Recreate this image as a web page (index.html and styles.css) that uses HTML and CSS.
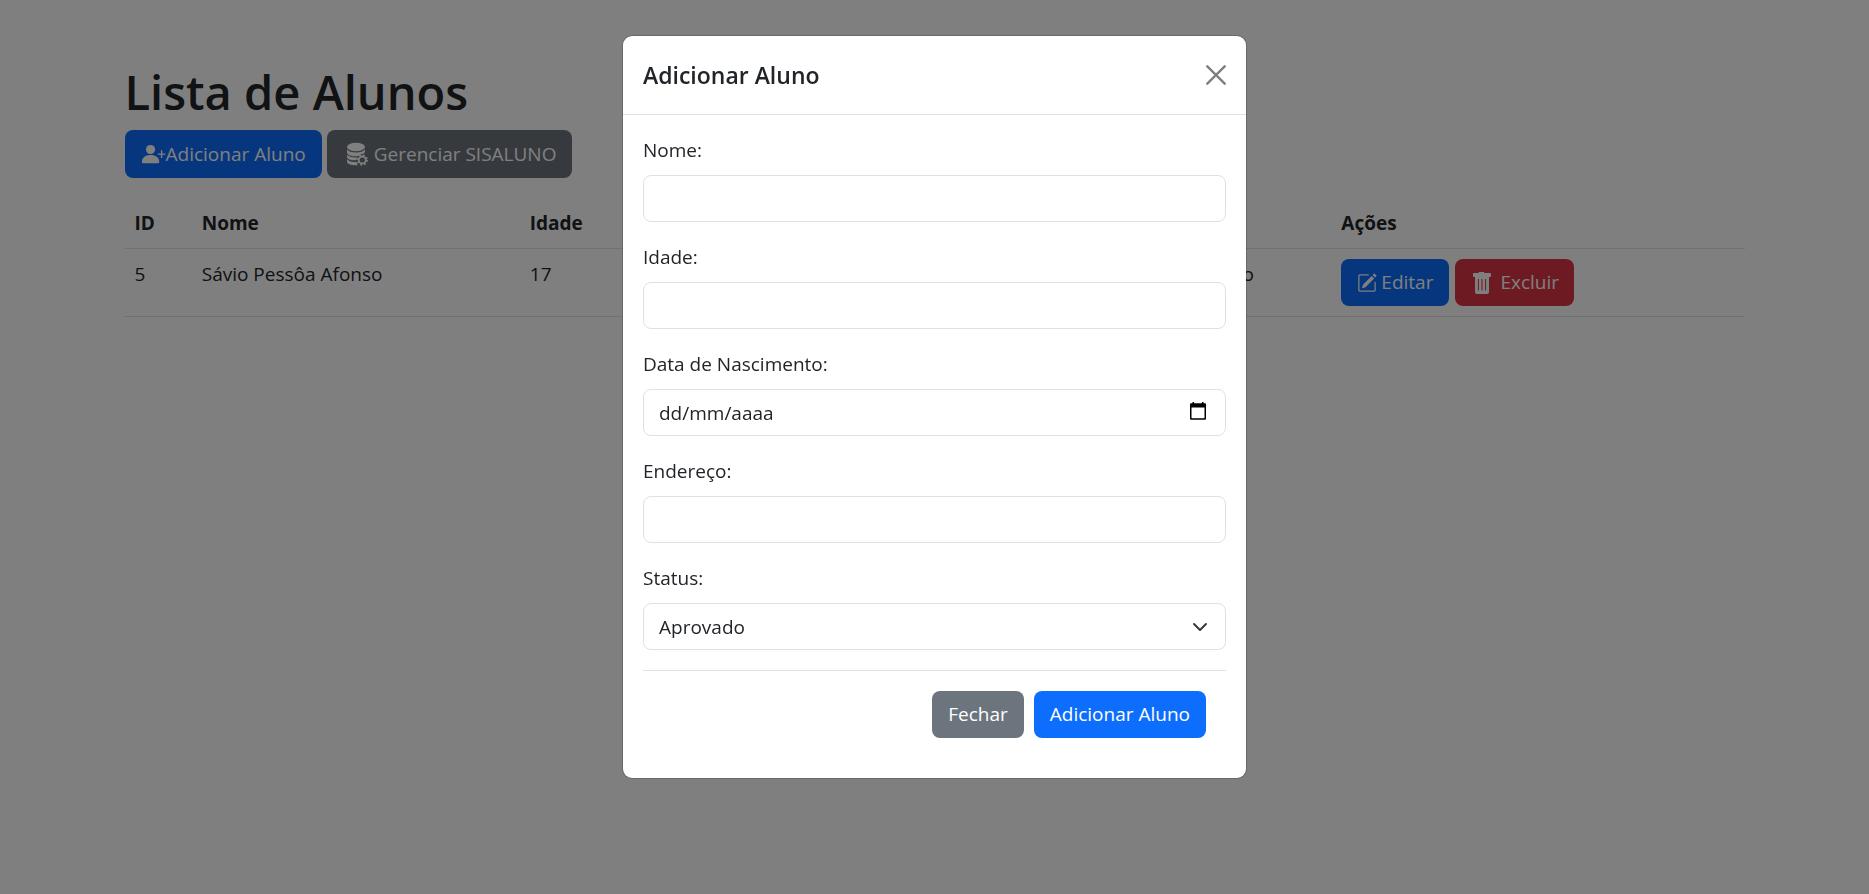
FILE: index.html
```html
<!DOCTYPE html>
<html lang="pt-BR">
<head>
<meta charset="utf-8">
<meta name="viewport" content="width=device-width, initial-scale=1">
<title>Lista de Alunos</title>
<link rel="stylesheet" href="styles.css">
</head>
<body>
<main class="container">
  <h1 class="page-title">Lista de Alunos</h1>
  <div class="toolbar">
    <button type="button" class="btn btn-primary btn-add">
      <svg class="icon" width="24" height="24" viewBox="0 0 24 24" fill="currentColor" aria-hidden="true"><circle cx="8.500" cy="7.500" r="4.600"/><path d="M0 20.500c-.4-5 3.500-7.500 8.600-7.500s9 2.500 8.600 7.500q-.1.800-1 .800H1q-.9 0-1-.8z"/><path d="M18.900 8.300h1.400v3.100h3.100v1.400h-3.100v3.100h-1.400v-3.100h-3.100v-1.400h3.100z"/></svg>Adicionar Aluno
    </button>
    <button type="button" class="btn btn-secondary btn-manage">
      <svg class="icon" width="24" height="24" viewBox="0 0 24 24" aria-hidden="true"><g fill="currentColor"><ellipse cx="11" cy="5" rx="9" ry="4.200"/><path d="M2 7.300c1.500 2.300 5 3.100 9 3.100s7.500-.8 9-3.100v2.200c0 1.200-.9 2-2.300 2.500-2 .2-3.500 1-4.600 2.300-5.600.4-11.100-.9-11.100-4.100z"/><path d="M2 12.400c1.800 2.400 5.800 3.200 10.100 3l-.6 2.900C6 18.500 2 17.300 2 14.700z"/><path d="M2 17.300c1.800 2.200 5.500 2.900 9.500 2.800l1.200 3.100C6.500 23.500 2 22.300 2 19.500z"/></g><g fill="none" stroke="currentColor"><circle cx="17.300" cy="18" r="3.500" stroke-width="1.800"/><circle cx="17.300" cy="18" r="4.900" stroke-width="1.500" stroke-dasharray="1.900 1.948"/></g></svg>Gerenciar SISALUNO
    </button>
  </div>
  <table class="table">
    <colgroup><col class="col-id"><col class="col-name"><col class="col-age"><col class="col-birth"><col class="col-address"><col class="col-status"><col class="col-actions"></colgroup>
    <thead>
      <tr><th>ID</th><th>Nome</th><th>Idade</th><th>Nascimento</th><th>Endereço</th><th>Status</th><th>Ações</th></tr>
    </thead>
    <tbody>
      <tr>
        <td>5</td><td>Sávio Pessôa Afonso</td><td>17</td><td></td><td></td><td>Aprovado</td>
        <td>
          <div class="row-actions">
            <button type="button" class="btn btn-primary btn-edit">
              <svg class="icon" width="20" height="20" viewBox="0 0 16 16" fill="currentColor" aria-hidden="true"><path d="M15.502 1.940a.5.5 0 0 1 0 .706L14.459 3.690l-2-2L13.502.646a.5.5 0 0 1 .707 0l1.293 1.293zm-1.750 2.456-2-2L4.939 9.210a.5.5 0 0 0-.121.196l-.805 2.414a.25.25 0 0 0 .316.316l2.414-.805a.5.5 0 0 0 .196-.120l6.813-6.814z"/><path fill-rule="evenodd" d="M1 13.500A1.500 1.500 0 0 0 2.500 15h11a1.500 1.500 0 0 0 1.500-1.500v-6a.5.5 0 0 0-1 0v6a.5.5 0 0 1-.5.5h-11a.5.5 0 0 1-.5-.5v-11a.5.5 0 0 1 .5-.5H9a.5.5 0 0 0 0-1H2.500A1.500 1.500 0 0 0 1 2.500z"/></svg>Editar
            </button>
            <button type="button" class="btn btn-danger btn-delete">
              <svg class="icon" width="24" height="24" viewBox="0 0 24 24" fill="currentColor" aria-hidden="true"><path fill-rule="evenodd" d="M9.500 1h4q.8 0 1 1h5.600q.9 0 .9.900v2.200q0 .9-.9.900H19v15q0 2-2 2H7q-2 0-2-2V6H3.800Q3 6 3 5.100V2.900Q3 2 3.800 2h4.700q.2-1 1-1zM7.900 8v11.500h1V8zM11.500 8v11.500h1V8zM15.100 8v11.500h1V8z"/></svg>Excluir
            </button>
          </div>
        </td>
      </tr>
    </tbody>
  </table>
</main>

<div class="backdrop">
  <section class="modal" role="dialog" aria-modal="true" aria-labelledby="modal-title">
    <header class="modal-header">
      <h2 class="modal-title" id="modal-title">Adicionar Aluno</h2>
      <button type="button" class="btn-close" aria-label="Fechar janela">
        <svg class="icon" width="20" height="20" viewBox="0 0 20 20" fill="none" stroke="currentColor" stroke-width="2.400" stroke-linecap="round" aria-hidden="true"><path d="M1.300 1.300l17.400 17.400M18.700 1.300L1.300 18.700"/></svg>
      </button>
    </header>
    <form class="modal-body">
      <div class="field">
        <label for="nome">Nome:</label>
        <input class="control" type="text" id="nome">
      </div>
      <div class="field">
        <label for="idade">Idade:</label>
        <input class="control" type="text" inputmode="numeric" id="idade">
      </div>
      <div class="field">
        <label for="nascimento">Data de Nascimento:</label>
        <div class="date">
          <input class="control" type="text" id="nascimento" placeholder="dd/mm/aaaa">
          <button type="button" class="date-picker" aria-label="Abrir calendário">
            <svg class="icon" width="20" height="20" viewBox="0 0 20 20" aria-hidden="true"><path fill="currentColor" fill-rule="evenodd" d="M4.500 1h1.600v1.300h7.800V1h1.600v1.300H17q1 0 1 1v14.400q0 1-1 1H3q-1 0-1-1V3.300q0-1 1-1h1.500zM3.500 6.500v10.700h13V6.500z"/></svg>
          </button>
        </div>
      </div>
      <div class="field">
        <label for="endereco">Endereço:</label>
        <input class="control" type="text" id="endereco">
      </div>
      <div class="field">
        <label for="status">Status:</label>
        <select class="control select" id="status"><option>Aprovado</option></select>
      </div>
      <footer class="modal-footer">
        <button type="button" class="btn btn-secondary">Fechar</button>
        <button type="submit" class="btn btn-primary">Adicionar Aluno</button>
      </footer>
    </form>
  </section>
</div>
</body>
</html>
```
FILE: styles.css
```css
*, *::before, *::after { box-sizing: border-box; }

body {
  margin: 0;
  background: #fff;
  color: #212529;
  font: 400 19px/30px "Segoe UI", "Open Sans", "Noto Sans", sans-serif;
}

button, input, select { font: inherit; color: inherit; margin: 0; }

.icon { display: block; flex: none; }

.container {
  max-width: 1650px;
  margin: 0 auto;
  padding: 62px 15px 0;
}

.page-title {
  margin: 0 0 8px;
  font-size: 47px;
  line-height: 60px;
  font-weight: 600;
}

.toolbar { display: flex; gap: 5px; min-height: 48px; margin-bottom: 20px; }

.btn {
  display: inline-flex;
  align-items: center;
  justify-content: center;
  padding: 8px 16px;
  border: 0;
  border-radius: 8px;
  color: #fff;
  line-height: 31px;
  white-space: nowrap;
  cursor: pointer;
}
.btn-primary { background: #0d6efd; }
.btn-secondary { background: #6c757d; }
.btn-danger { background: #dc3545; }
.btn-add { padding: 8px 16px 8px 17px; }
.btn-manage { gap: 5px; padding: 8px 16px 8px 18px; }
.btn-delete { gap: 6px; padding: 8px 15px; }
.btn-edit { gap: 4px; }

.table { width: 100%; border-collapse: collapse; table-layout: fixed; }
.table th, .table td {
  padding: 10px;
  border-bottom: 1px solid #dee2e6;
  text-align: left;
  vertical-align: top;
}
.table th { font-weight: 700; }
.col-id { width: 4.15%; }
.col-name { width: 20.25%; }
.col-age { width: 8%; }
.col-birth { width: 16%; }
.col-address { width: 15.4%; }
.col-status { width: 10.7%; }
.col-actions { width: 25.5%; }
.row-actions { display: flex; gap: 6px; }

.backdrop {
  position: fixed;
  inset: 0;
  overflow: auto;
  padding: 35px 16px;
  background: rgba(0, 0, 0, 0.5);
}

.modal {
  max-width: 625px;
  margin: 0 auto;
  background: #fff;
  background-clip: padding-box;
  border: 1px solid rgba(0, 0, 0, 0.175);
  border-radius: 10px;
}
.modal-header {
  display: flex;
  align-items: center;
  justify-content: space-between;
  padding: 20px;
  border-bottom: 1px solid #dee2e6;
}
.modal-title { margin: 0; font-size: 23px; line-height: 38px; font-weight: 600; }
.btn-close {
  padding: 0;
  border: 0;
  background: none;
  color: #7f7f7f;
  cursor: pointer;
}
.modal-body { padding: 20px; }

.field { display: flex; flex-direction: column; gap: 10px; margin-bottom: 20px; }
.control {
  width: 100%;
  height: 47px;
  padding: 0 15px;
  border: 1px solid #dee2e6;
  border-radius: 8px;
  background: #fff;
}
.control::placeholder { color: #212529; opacity: 1; }
.select {
  appearance: none;
  background: #fff url("data:image/svg+xml,%3Csvg xmlns='http://www.w3.org/2000/svg' viewBox='0 0 16 16'%3E%3Cpath fill='none' stroke='%23343a40' stroke-linecap='round' stroke-linejoin='round' stroke-width='2' d='m2 5 6 6 6-6'/%3E%3C/svg%3E") no-repeat right 17px center / 16px 16px;
}

.date { position: relative; }
.date-picker {
  position: absolute;
  top: 12px;
  right: 18px;
  padding: 0;
  border: 0;
  background: none;
  color: #000;
}

.modal-footer {
  display: flex;
  justify-content: flex-end;
  gap: 10px;
  padding: 20px;
  border-top: 1px solid #dee2e6;
}
```
